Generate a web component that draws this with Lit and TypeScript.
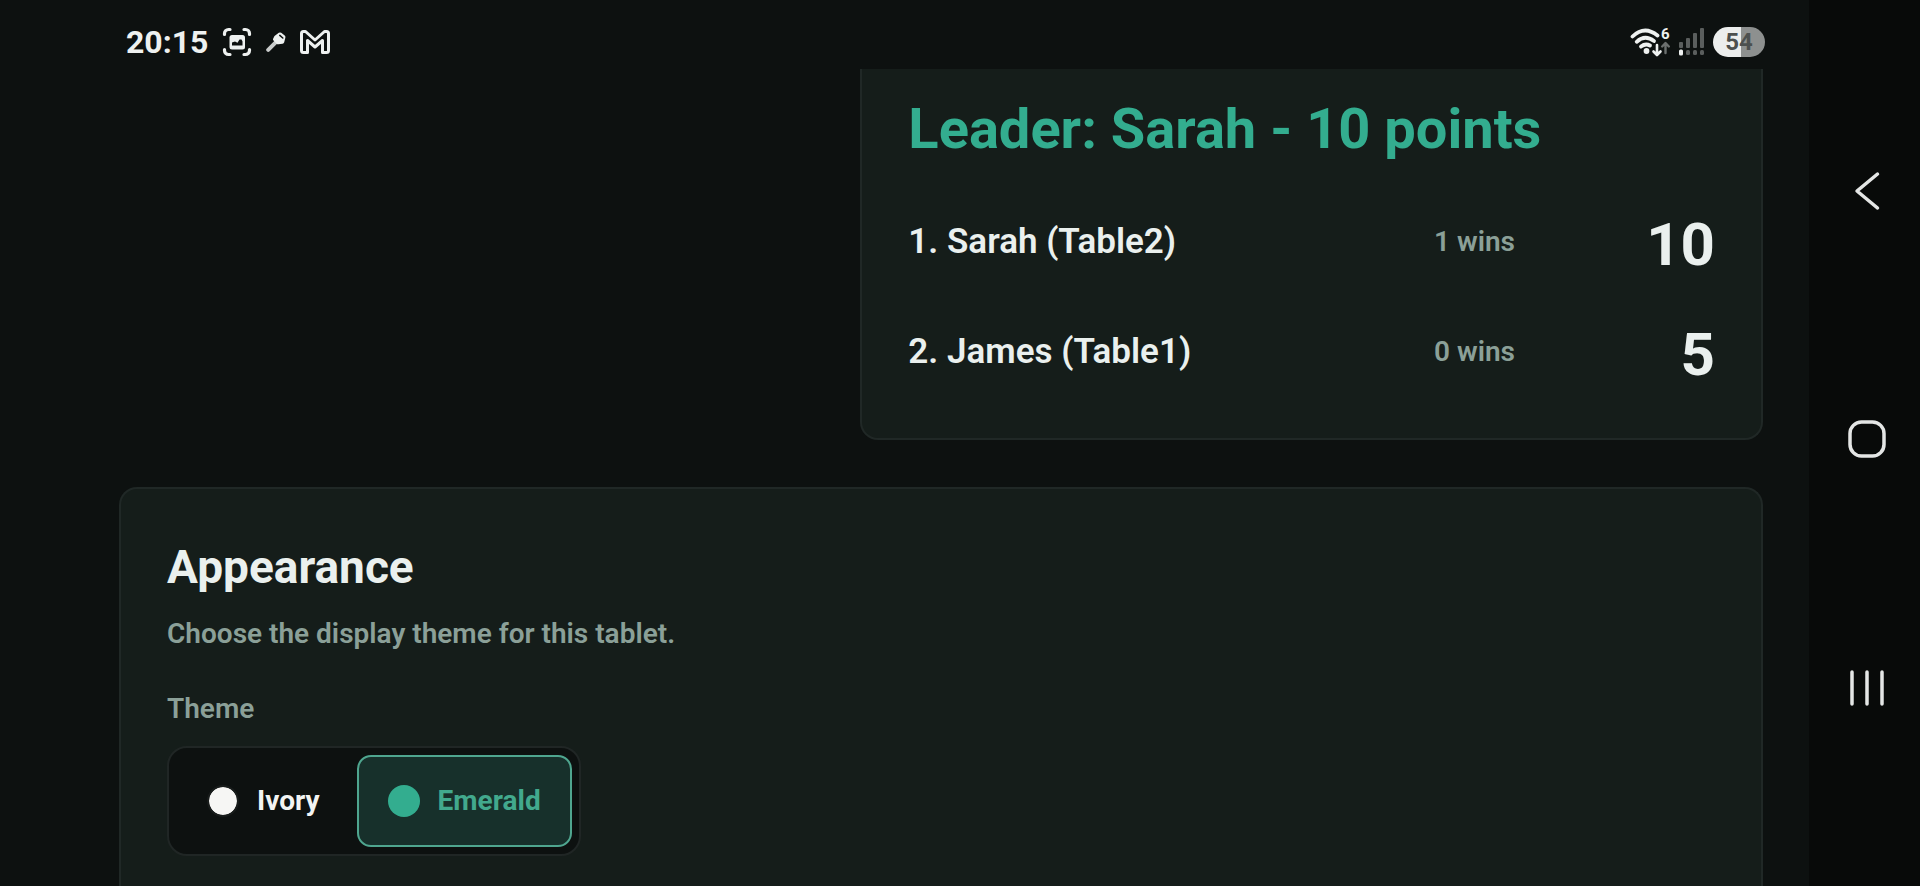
import { LitElement, html, css, svg } from "lit";
import { customElement, state } from "lit/decorators.js";

interface Standing {
  rank: number;
  name: string;
  wins: number;
  points: number;
}

const standings: Standing[] = [
  { rank: 1, name: "Sarah (Table2)", wins: 1, points: 10 },
  { rank: 2, name: "James (Table1)", wins: 0, points: 5 },
];

@customElement("status-bar")
class StatusBar extends LitElement {
  static styles = css`
    :host {
      display: flex;
      align-items: center;
      justify-content: space-between;
      height: 69px;
      padding: 14px 44px 0 126px;
      box-sizing: border-box;
      color: #eef1f0;
    }
    .group {
      display: flex;
      align-items: center;
    }
    .left {
      gap: 14px;
    }
    .right {
      gap: 9px;
    }
    .clock {
      font-size: 32px;
      line-height: 40px;
      font-weight: 700;
    }
    .battery {
      display: flex;
      align-items: center;
      justify-content: center;
      width: 52px;
      height: 30px;
      border-radius: 15px;
      background: linear-gradient(90deg, #eceeed 54%, #8d908f 54%);
      color: #4c504f;
      font-size: 24px;
      line-height: 30px;
      font-weight: 700;
    }
    .generation {
      font-size: 15px;
      font-weight: 700;
    }
    svg {
      display: block;
    }
  `;

  render() {
    return html`
      <div class="group left">
        <span class="clock">20:15</span>
        <svg width="30" height="30" viewBox="0 0 30 30" fill="none" aria-hidden="true">
          <path
            d="M2.500 7.500V6.500a4 4 0 0 1 4-4h1.500M22 2.500h1.500a4 4 0 0 1 4 4v1M27.500 22.500v1a4 4 0 0 1-4 4H22M8 27.500H6.500a4 4 0 0 1-4-4v-1"
            stroke="#eef1f0" stroke-width="3.200" stroke-linecap="round" />
          <rect x="7.500" y="8" width="15.500" height="14.500" rx="2.500" fill="#eef1f0" />
          <path d="M10 18.500v-3l3-1 2.500 1.200 2-3.200h2l1 2v4z" fill="#0d1110" />
        </svg>
        <svg width="20" height="20" viewBox="0 0 20 20" aria-hidden="true">
          <path d="M2.200 17.800l8-8" stroke="#c9cccb" stroke-width="4" stroke-linecap="round" />
          <path d="M8.500 4 12.800.8q1.200-.8 2.400 0l3.500 2.700q1 .8.7 2l-1.200 4.800q-.4 1.200-1.600 1.400l-4.200.6q-1 .2-1.800-.6L7.500 8.500q-.8-.8-.4-1.800z" fill="#eef1f0" />
          <path d="M13.800 3.400l3 2.600" stroke="#0d1110" stroke-width="1.500" stroke-linecap="round" />
        </svg>
        <svg width="30" height="24" viewBox="0 0 30 24" fill="none" aria-hidden="true">
          <path
            d="M1.500 3.500Q1.500 1.500 3.500 1.500H5.500L15 10 24.500 1.500h2q2 0 2 2V20.500q0 2-2 2H22.500V10.500L15 17 7.500 10.500V22.500H3.500q-2 0-2-2z"
            stroke="#eef1f0" stroke-width="3" stroke-linejoin="round" />
        </svg>
      </div>
      <div class="group right">
        <svg width="40" height="40" viewBox="0 -5 40 40" fill="none" aria-hidden="true">
          <g stroke="#eef1f0" stroke-width="3.800" stroke-linecap="round">
            <path d="M2.500 9.500Q14.500-2 27.500 8.500" />
            <path d="M6.700 14.800Q14.800 7.200 24 14" />
            <path d="M11 19.500Q15.500 16 20 18.500" />
          </g>
          <circle cx="16.500" cy="24" r="2.900" fill="#eef1f0" />
          <path d="M27 18v9.500M23.500 24.500l3.500 3.500 3.500-3.500" stroke="#eef1f0" stroke-width="2.600" stroke-linecap="round" stroke-linejoin="round" />
          <path d="M35.500 26V16.500M32.200 19.500l3.300-3.500 3.300 3.500" stroke="#6b6f6e" stroke-width="2.400" stroke-linecap="round" stroke-linejoin="round" />
          <text class="generation" x="31" y="12" fill="#eef1f0">6</text>
        </svg>
        <svg width="25" height="28" viewBox="0 0 25 28" aria-hidden="true">
          <g fill="#5a5e5d">
            <rect x="0" y="14" width="4" height="6" rx="1" />
            <rect x="7" y="10" width="4" height="10" rx="1" />
            <rect x="14" y="5" width="4" height="15" rx="1" />
            <rect x="21" y="0" width="4" height="20" rx="1" />
            <rect x="7" y="22" width="4" height="5" rx="1.500" />
            <rect x="14" y="22" width="4" height="5" rx="1.500" />
            <rect x="21" y="22" width="4" height="5" rx="1.500" />
          </g>
          <rect x="0" y="21.500" width="4" height="6" rx="1.500" fill="#eef1f0" />
        </svg>
        <span class="battery">54</span>
      </div>
    `;
  }
}

@customElement("nav-rail")
class NavRail extends LitElement {
  static styles = css`
    :host {
      display: flex;
      flex-direction: column;
      padding: 67px 0 74px 4px;
      box-sizing: border-box;
      background: #080a09;
    }
    .key {
      flex: 1;
      display: flex;
      align-items: center;
      justify-content: center;
      padding: 0;
      border: 0;
      background: none;
      color: #e4e6e5;
      cursor: pointer;
    }
  `;

  private key(label: string, shape: unknown) {
    return html`<button class="key" type="button" aria-label=${label}>
      <svg width="40" height="40" viewBox="0 0 40 40" fill="none" stroke="currentColor"
        stroke-width="3.500" stroke-linecap="round" stroke-linejoin="round">${shape}</svg>
    </button>`;
  }

  render() {
    return html`
      ${this.key("Back", svg`<path d="M30.500 3 10 20 30.500 37" />`)}
      ${this.key("Home", svg`<rect x="3" y="3" width="34" height="34" rx="11.500" />`)}
      ${this.key("Recents", svg`<path d="M5 4v32M20 4v32M35 4v32" />`)}
    `;
  }
}

@customElement("app-root")
class AppRoot extends LitElement {
  @state() private theme = "Emerald";

  static styles = css`
    :host {
      display: grid;
      grid-template-columns: minmax(0, 1fr) 111px;
      height: 100vh;
      overflow: hidden;
      background: #0d1110;
      color: #eaf0ee;
      font-family: Roboto, sans-serif;
    }
    .screen {
      display: flex;
      flex-direction: column;
      min-height: 0;
    }
    .content {
      flex: 1;
      min-height: 0;
      overflow: hidden;
      display: flex;
      flex-direction: column;
      gap: 47px;
      padding: 0 46px 0 119px;
    }
    .overview {
      display: grid;
      grid-template-columns: 10fr 13fr;
      gap: 47px;
      flex: none;
    }
    .card {
      background: #151d1a;
      border: 2px solid #202826;
      border-radius: 18px;
      padding: 50px 46px;
    }
    .leaderboard {
      grid-column: 2;
      border-top: 0;
      border-top-left-radius: 0;
      border-top-right-radius: 0;
      padding-top: 27px;
      padding-bottom: 31px;
    }
    .leader {
      margin: 0 0 25px;
      color: #33ad8f;
      font-size: 56px;
      line-height: 66px;
      font-weight: 700;
    }
    .standings {
      width: 100%;
      border-collapse: collapse;
    }
    .standings td {
      height: 110px;
      padding: 0;
      box-sizing: border-box;
      vertical-align: middle;
      white-space: nowrap;
    }
    .name {
      font-size: 35px;
      line-height: 42px;
      font-weight: 600;
    }
    .standings .wins {
      width: 181px;
      color: #8ba098;
      font-size: 28px;
      line-height: 34px;
      font-weight: 600;
    }
    .standings .points {
      width: 100px;
      padding-top: 6px;
      text-align: right;
      font-size: 60px;
      line-height: 70px;
      font-weight: 700;
    }
    .appearance {
      flex: 1 0 auto;
      border-bottom: 0;
      border-bottom-left-radius: 0;
      border-bottom-right-radius: 0;
      padding-bottom: 0;
    }
    .title {
      margin: 0 0 22px;
      font-size: 46px;
      line-height: 56px;
      font-weight: 700;
    }
    .note,
    .label {
      margin: 0;
      color: #8ba098;
      font-size: 28px;
      line-height: 34px;
      font-weight: 600;
    }
    .note {
      margin-bottom: 41px;
    }
    .label {
      margin-bottom: 20px;
    }
    .segments {
      display: inline-flex;
      gap: 6px;
      padding: 7px;
      border: 2px solid #202625;
      border-radius: 20px;
      background: #0d1110;
    }
    .segment {
      display: flex;
      align-items: center;
      gap: 18px;
      height: 92px;
      padding: 0 29px;
      border: 2px solid transparent;
      border-radius: 14px;
      background: none;
      color: #f2f4f3;
      font: 700 28px/34px Roboto, sans-serif;
      cursor: pointer;
    }
    .segment[aria-pressed="true"] {
      border-color: #4fa68f;
      background: #17302b;
      color: #42a98d;
    }
    .dot {
      width: 32px;
      height: 32px;
      box-sizing: border-box;
      border-radius: 50%;
    }
    .ivory {
      background: #f6f6f4;
      border: 2px solid #181c1b;
      background-clip: padding-box;
    }
    .emerald {
      background: #33ad8f;
    }
  `;

  private segment(name: string) {
    return html`<button class="segment" type="button"
      aria-pressed=${this.theme === name ? "true" : "false"}
      @click=${() => (this.theme = name)}>
      <span class="dot ${name.toLowerCase()}"></span>${name}
    </button>`;
  }

  render() {
    const top = standings[0];
    return html`
      <div class="screen">
        <status-bar></status-bar>
        <main class="content">
          <div class="overview">
            <section class="card leaderboard">
              <h1 class="leader">Leader: ${top.name.split(" ")[0]} - ${top.points} points</h1>
              <table class="standings">
                <tbody>
                  ${standings.map(
                    (s) => html`<tr>
                      <td class="name">${s.rank}. ${s.name}</td>
                      <td class="wins">${s.wins} wins</td>
                      <td class="points">${s.points}</td>
                    </tr>`,
                  )}
                </tbody>
              </table>
            </section>
          </div>
          <section class="card appearance">
            <h2 class="title">Appearance</h2>
            <p class="note">Choose the display theme for this tablet.</p>
            <p class="label" id="theme-label">Theme</p>
            <div class="segments" role="group" aria-labelledby="theme-label">
              ${this.segment("Ivory")}${this.segment("Emerald")}
            </div>
          </section>
        </main>
      </div>
      <nav-rail></nav-rail>
    `;
  }
}
